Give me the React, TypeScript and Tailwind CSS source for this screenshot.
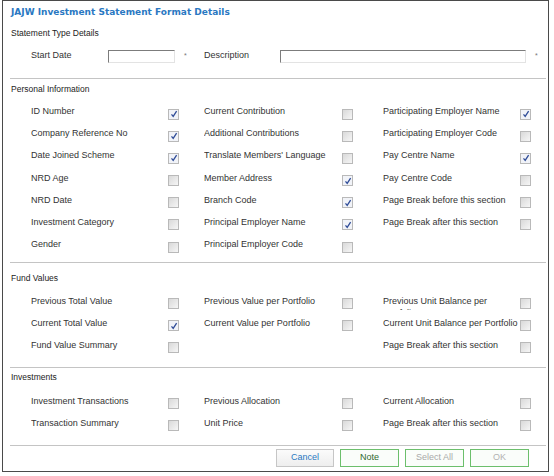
import type { ReactNode } from "react";

type Item = { label: ReactNode; checked?: boolean } | null;

const FONT = { fontFamily: '"Liberation Sans", Arial, sans-serif' };

const PERSONAL: Item[][] = [
  [{ label: "ID Number", checked: true }, { label: "Current Contribution" }, { label: "Participating Employer Name", checked: true }],
  [{ label: "Company Reference No", checked: true }, { label: "Additional Contributions" }, { label: "Participating Employer Code" }],
  [{ label: "Date Joined Scheme", checked: true }, { label: "Translate Members' Language" }, { label: "Pay Centre Name", checked: true }],
  [{ label: "NRD Age" }, { label: "Member Address", checked: true }, { label: "Pay Centre Code" }],
  [{ label: "NRD Date" }, { label: "Branch Code", checked: true }, { label: "Page Break before this section" }],
  [{ label: "Investment Category" }, { label: "Principal Employer Name", checked: true }, { label: "Page Break after this section" }],
  [{ label: "Gender" }, { label: "Principal Employer Code" }, null],
];

const FUND: Item[][] = [
  [
    { label: "Previous Total Value" },
    { label: "Previous Value per Portfolio" },
    {
      label: (
        <>
          Previous Unit Balance per
          <br />
          Portfolio
        </>
      ),
    },
  ],
  [{ label: "Current Total Value", checked: true }, { label: "Current Value per Portfolio" }, { label: "Current Unit Balance per Portfolio" }],
  [{ label: "Fund Value Summary" }, null, { label: "Page Break after this section" }],
];

const INVEST: Item[][] = [
  [{ label: "Investment Transactions" }, { label: "Previous Allocation" }, { label: "Current Allocation" }],
  [{ label: "Transaction Summary" }, { label: "Unit Price" }, { label: "Page Break after this section" }],
];

function Box({ checked }: { checked?: boolean }) {
  return (
    <span
      className={`mt-[8.5px] flex h-[11px] w-[11px] shrink-0 items-center justify-center border border-[#b9b9b9] ${
        checked ? "bg-[#f1f3f8]" : "bg-gradient-to-br from-[#d9d9d9] to-[#f6f6f6]"
      }`}
    >
      {checked && (
        <svg width="8" height="8" viewBox="0 0 8 8">
          <path d="M1.5 4.3 L3.2 6.3 L6.6 1.2" fill="none" stroke="#2f4c98" strokeWidth="1.3" />
        </svg>
      )}
    </span>
  );
}

function Cell({ item, w, cw }: { item: Item; w: string; cw: string }) {
  return (
    <div className={`flex ${cw}`}>
      {item && (
        <>
          <div className={`${w} h-[20px] overflow-hidden pt-[5px] text-[9px] leading-[12px] text-[#333]`}>{item.label}</div>
          <Box checked={item.checked} />
        </>
      )}
    </div>
  );
}

function Rows({ rows }: { rows: Item[][] }) {
  return (
    <div className="pl-[28px]">
      {rows.map((r, i) => (
        <div key={i} className="flex h-[22.2px]">
          <Cell item={r[0]} w="w-[137px]" cw="w-[173px]" />
          <Cell item={r[1]} w="w-[138px]" cw="w-[179px]" />
          <Cell item={r[2]} w="w-[137px]" cw="w-[150px]" />
        </div>
      ))}
    </div>
  );
}

const Line = () => <div className="ml-[7px] mr-[2px] h-px bg-[#c4c4c4]" />;

export default function App() {
  return (
    <div className="h-[476px] w-[554px] bg-white pl-[2px]" style={FONT}>
      <div className="h-[472px] w-[547px] border border-[#4a4a4a] bg-white">
        <div
          className="flex h-[23px] items-center pl-[8px] text-[9px] font-bold text-[#2a78c2]"
          style={{ fontFamily: '"DejaVu Sans", Verdana, sans-serif' }}
        >
          JAJW Investment Statement Format Details
        </div>
        <div className="flex h-[19px] items-center pl-[8px] text-[8.5px] text-[#222]">Statement Type Details</div>
        <div className="flex h-[26px] items-center pl-[28px] text-[9px] text-[#333]">
          <span className="w-[77px]">Start Date</span>
          <span className="h-[13px] w-[67px] border border-b-[#e3e3e3] border-l-[#7c7c7c] border-r-[#e3e3e3] border-t-[#7c7c7c] bg-white" />
          <span className="ml-[9px] w-[20px] text-[7px] text-[#777]">*</span>
          <span className="w-[76px]">Description</span>
          <span className="h-[13px] w-[246px] border border-b-[#e3e3e3] border-l-[#7c7c7c] border-r-[#e3e3e3] border-t-[#7c7c7c] bg-white" />
          <span className="ml-[9px] text-[7px] text-[#777]">*</span>
        </div>
        <div className="h-[9px]" />
        <Line />
        <div className="flex h-[21px] items-center pl-[8px] text-[8.5px] text-[#222]">Personal Information</div>
        <Rows rows={PERSONAL} />
        <div className="h-[6.6px]" />
        <Line />
        <div className="h-[26.7px] pl-[8px] pt-[8px] text-[8.5px] leading-[14px] text-[#222]">Fund Values</div>
        <Rows rows={FUND} />
        <div className="h-[11px]" />
        <Line />
        <div className="h-[21.4px] pl-[8px] pt-[2px] text-[8.5px] leading-[14px] text-[#222]">Investments</div>
        <Rows rows={INVEST} />
        <div className="h-[11px]" />
        <Line />
        <div className="mt-[3px] flex justify-end gap-[6px] pr-[19px] text-[9px]">
          <button className="h-[18px] w-[58px] border border-[#c6c6c6] bg-gradient-to-b from-[#fbfbfb] to-[#eeeeee] text-[#2a78c2]">
            Cancel
          </button>
          <button className="h-[18px] w-[59px] border border-[#6cbf6c] bg-[#fafdfa] text-[#2f6a2f]">Note</button>
          <button className="h-[18px] w-[59px] border border-[#6cbf6c] bg-[#fafdfa] text-[#a9a9a9]">Select All</button>
          <button className="h-[18px] w-[59px] border border-[#6cbf6c] bg-[#fafdfa] text-[#b3b3b3]">OK</button>
        </div>
      </div>
    </div>
  );
}
